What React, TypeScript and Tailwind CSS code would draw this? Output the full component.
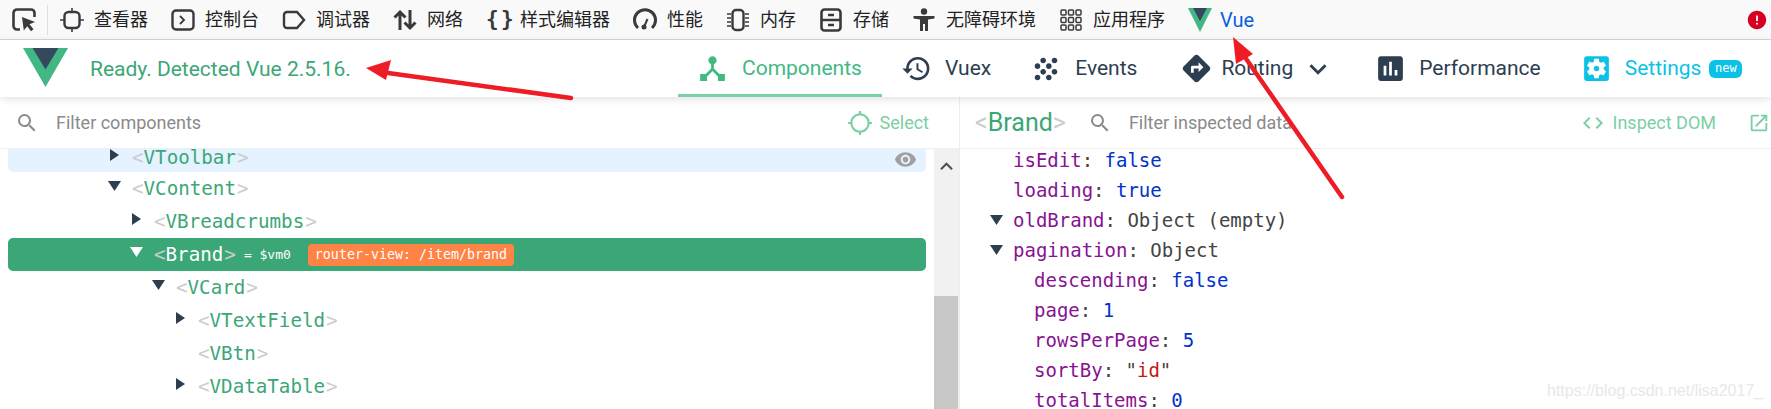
import type { ReactNode } from "react";
import {
  MdAssessment,
  MdCode,
  MdDeviceHub,
  MdDirections,
  MdError,
  MdExpandLess,
  MdExpandMore,
  MdGpsNotFixed,
  MdGrain,
  MdHistory,
  MdOpenInNew,
  MdSearch,
  MdSettingsApplications,
  MdVisibility,
} from "react-icons/md";

const ui = "font-['Roboto','Noto_Sans_CJK_SC',sans-serif]";
const mono = "font-['DejaVu_Sans_Mono',monospace]";

function VueLogo({ className }: { className: string }) {
  return (
    <svg viewBox="0 0 40 40" preserveAspectRatio="none" className={className}>
      <polygon points="0,0 40,0 20,40" fill="#41b883" />
      <polygon points="8.5,0 31.5,0 20,22" fill="#35495e" />
    </svg>
  );
}

const stroke = { fill: "none", stroke: "#3a3a3c", strokeWidth: 2.4 };

const toolbarItems: { label: string; icon: ReactNode }[] = [
  {
    label: "查看器",
    icon: (
      <svg viewBox="0 0 24 24" className="w-6 h-6" {...stroke}>
        <rect x="4.5" y="4" width="15" height="16" rx="4" />
        <path d="M12 0v4M12 20v4M0 12h4.5M19.5 12H24" strokeWidth="1.6" />
      </svg>
    ),
  },
  {
    label: "控制台",
    icon: (
      <svg viewBox="0 0 24 24" className="w-6 h-6" {...stroke}>
        <rect x="1.5" y="2.5" width="21" height="19" rx="3.5" />
        <path d="M9 8l4 4-4 4" strokeWidth="1.8" />
      </svg>
    ),
  },
  {
    label: "调试器",
    icon: (
      <svg viewBox="0 0 24 24" className="w-6 h-6" {...stroke}>
        <path d="M5 4h10l7 8-7 8H5a3 3 0 0 1-3-3V7a3 3 0 0 1 3-3z" />
      </svg>
    ),
  },
  {
    label: "网络",
    icon: (
      <svg viewBox="0 0 24 24" className="w-6 h-6" {...stroke} strokeWidth="3">
        <path d="M7 22V4M1.5 9.5L7 4l5.5 5.5M17 2v18M11.5 14.5L17 20l5.5-5.5" />
      </svg>
    ),
  },
  {
    label: "样式编辑器",
    icon: (
      <span className={`${mono} w-6 flex justify-between text-[21px] leading-none font-bold text-[#3a3a3c]`}>
        <span className="w-[9px]">{"{"}</span>
        <span className="w-[9px]">{"}"}</span>
      </span>
    ),
  },
  {
    label: "性能",
    icon: (
      <svg viewBox="0 0 24 24" className="w-6 h-6" {...stroke} strokeWidth="3">
        <path d="M5 20a10.5 10.5 0 1 1 14 0" />
        <path d="M11 19l3.5-8" strokeWidth="2" />
        <circle cx="11" cy="19" r="2.5" fill="#3a3a3c" stroke="none" />
      </svg>
    ),
  },
  {
    label: "内存",
    icon: (
      <svg viewBox="0 0 24 24" className="w-6 h-6" {...stroke} strokeWidth="2">
        <rect x="6.5" y="2" width="11" height="20" rx="3.5" strokeWidth="2.4" />
        <path d="M1 6h4M1 10h4M1 14h4M1 18h4M19 6h4M19 10h4M19 14h4M19 18h4" strokeWidth="1.4" />
      </svg>
    ),
  },
  {
    label: "存储",
    icon: (
      <svg viewBox="0 0 24 24" className="w-6 h-6" {...stroke}>
        <rect x="2.5" y="1.5" width="19" height="21" rx="3" strokeWidth="2.6" />
        <path d="M3 12h18M9 7h6M9 17h6" />
      </svg>
    ),
  },
  {
    label: "无障碍环境",
    icon: (
      <svg viewBox="0 0 24 24" className="w-6 h-6" fill="#3a3a3c">
        <circle cx="12" cy="3.5" r="3.2" />
        <path d="M1.5 8h21v2.6l-6.5 1V23h-3v-7h-2v7h-3V11.6l-6.5-1z" />
      </svg>
    ),
  },
  {
    label: "应用程序",
    icon: (
      <svg viewBox="0 0 24 24" className="w-6 h-6" fill="none" stroke="#3a3a3c" strokeWidth="1.5">
        {[2, 9.5, 17].flatMap((y) =>
          [2, 9.5, 17].map((x) => <rect key={`${x}-${y}`} x={x} y={y} width="5" height="5" rx="1" />),
        )}
      </svg>
    ),
  },
];

function Toolbar() {
  return (
    <div className={`${ui} flex items-center h-[40px] shrink-0 bg-[#f9f9fa] border-b border-[#d7d7db] text-[18px] text-[#222]`}>
      <div className="w-[48px] h-[30px] pl-[12px] border-r border-[#e0e0e2] flex items-center">
        <svg viewBox="0 0 24 24" className="w-6 h-6" fill="none" stroke="#3a3a3c" strokeWidth="2.6">
          <path d="M8 21.5H5a3.5 3.5 0 0 1-3.5-3.5V5A3.5 3.5 0 0 1 5 1.5h14A3.5 3.5 0 0 1 22.5 5v4" />
          <path d="M10 9l13 5-5.5 2.2 4 5-2.5 2-3.8-5-3.4 4.2z" fill="#3a3a3c" stroke="none" />
        </svg>
      </div>
      <div className="flex items-center gap-[23px] ml-[12px]">
        {toolbarItems.map((item) => (
          <div key={item.label} className="flex items-center gap-[10px]">
            {item.icon}
            <span className="leading-none">{item.label}</span>
          </div>
        ))}
        <div className="flex items-center gap-[8px]">
          <VueLogo className="w-6 h-6" />
          <span className="text-[20px] text-[#0a5fdc]">Vue</span>
        </div>
      </div>
      <MdError className="ml-auto mr-[3px] w-[22px] h-[22px] text-[#d70022]" />
    </div>
  );
}

const tabs = [
  { label: "Vuex", icon: <MdHistory className="w-[31px] h-[31px]" />, left: "ml-[19px]", gap: "gap-[13px]" },
  { label: "Events", icon: <MdGrain className="w-[34px] h-[34px]" />, left: "ml-[38px]", gap: "gap-[12px]" },
  { label: "Routing", icon: <MdDirections className="w-[33px] h-[33px]" />, left: "ml-[43px]", gap: "gap-[8px]" },
];

function Header() {
  return (
    <div className={`${ui} relative z-10 flex items-center h-[57px] shrink-0 bg-white shadow-[0_2px_8px_rgba(0,0,0,0.12)] text-[21px]`}>
      <VueLogo className="ml-[23px] w-[45px] h-[39px] mt-[-3px]" />
      <span className="ml-[22px] w-[261px] mt-[2px] whitespace-nowrap text-[#3ba776]">Ready. Detected Vue 2.5.16.</span>
      <div className="ml-[327px] flex items-center h-full text-[#2c3e50]">
        <div className="flex items-center gap-[13px] w-[204px] h-full pl-[18px] pt-[3px] border-b-[3px] border-[#7bd2a5] text-[#42b983]">
          <MdDeviceHub className="w-[33px] h-[33px]" />
          <span>Components</span>
        </div>
        {tabs.map((tab) => (
          <div key={tab.label} className={`flex items-center ${tab.left} ${tab.gap}`}>
            {tab.icon}
            <span>{tab.label}</span>
          </div>
        ))}
        <MdExpandMore className="ml-[8px] w-[34px] h-[34px]" />
        <div className="flex items-center gap-[12px] ml-[39px]">
          <MdAssessment className="w-[33px] h-[33px]" />
          <span>Performance</span>
        </div>
        <div className="flex items-center ml-[39px] text-[#0bc2e6]">
          <MdSettingsApplications className="w-[33px] h-[33px]" />
          <span className="ml-[12px]">Settings</span>
          <span className={`${mono} ml-[8px] w-[33px] text-center h-[18px] leading-[17px] rounded-[6px] bg-[#0bc2e6] text-white text-[12px]`}>new</span>
        </div>
      </div>
    </div>
  );
}

function Caret({ open, light }: { open: boolean; light?: boolean }) {
  const color = light ? "#ffffff" : "#2c3e50";
  return open ? (
    <svg viewBox="0 0 13 10" className="w-[13px] h-[10px] mt-[-6px]">
      <polygon points="0,0 13,0 6.5,10" fill={color} />
    </svg>
  ) : (
    <svg viewBox="0 0 9 12" className="w-[9px] h-[12px] mt-[-6px] ml-[2px]">
      <polygon points="0,0 9,6 0,12" fill={color} />
    </svg>
  );
}

const treeRows = [
  { name: "VToolbar", depth: 0, caret: "right", hovered: true },
  { name: "VContent", depth: 0, caret: "down" },
  { name: "VBreadcrumbs", depth: 1, caret: "right" },
  { name: "Brand", depth: 1, caret: "down", selected: true },
  { name: "VCard", depth: 2, caret: "down" },
  { name: "VTextField", depth: 3, caret: "right" },
  { name: "VBtn", depth: 3 },
  { name: "VDataTable", depth: 3, caret: "right" },
];

function ComponentTree() {
  return (
    <div className={`${mono} flex-1`}>
      <div className="mx-[8px] text-[19.2px]">
        {treeRows.map((row) => (
          <div
            key={row.name}
            className={`flex items-center ${row.hovered ? "h-[23px] pb-[6px] leading-[17px] rounded-b-[5px] bg-[#e5f2ff]" : "h-[33px] pt-[1px] rounded-[5px]"} ${row.selected ? "bg-[#3ba776] text-white" : "text-[#3ba776]"}`}
            style={{ paddingLeft: 100 + row.depth * 22 }}
          >
            <span className="w-[24px] shrink-0">
              {row.caret && <Caret open={row.caret === "down"} light={row.selected} />}
            </span>
            <span className="text-[#ccc]">&lt;</span>
            <span>{row.name}</span>
            <span className="ml-[1px] text-[#ccc]">&gt;</span>
            {row.selected && (
              <>
                <span className="ml-[8px] text-[13px]">= $vm0</span>
                <span className="ml-[17px] h-[22px] px-[7px] rounded-[4px] bg-[#ff8344] text-[13.3px] leading-[21px]">
                  router-view: /item/brand
                </span>
              </>
            )}
            {row.hovered && <MdVisibility className="ml-auto mr-[9px] w-[23px] h-[23px] mt-[3px] text-[#a0a0a0]" />}
          </div>
        ))}
      </div>
    </div>
  );
}

type Part = { text: string; color: string };
const key = "text-[#881391]";
const blue = "text-[#0033cc]";
const dark = "text-[#444]";

const stateRows: { indent: boolean; open?: boolean; parts: Part[] }[] = [
  { indent: false, parts: [{ text: "isEdit", color: key }, { text: ": ", color: dark }, { text: "false", color: blue }] },
  { indent: false, parts: [{ text: "loading", color: key }, { text: ": ", color: dark }, { text: "true", color: blue }] },
  { indent: false, open: true, parts: [{ text: "oldBrand", color: key }, { text: ": Object (empty)", color: dark }] },
  { indent: false, open: true, parts: [{ text: "pagination", color: key }, { text: ": Object", color: dark }] },
  { indent: true, parts: [{ text: "descending", color: key }, { text: ": ", color: dark }, { text: "false", color: blue }] },
  { indent: true, parts: [{ text: "page", color: key }, { text: ": ", color: dark }, { text: "1", color: blue }] },
  { indent: true, parts: [{ text: "rowsPerPage", color: key }, { text: ": ", color: dark }, { text: "5", color: blue }] },
  {
    indent: true,
    parts: [
      { text: "sortBy", color: key },
      { text: ': "', color: dark },
      { text: "id", color: "text-[#c41a16]" },
      { text: '"', color: dark },
    ],
  },
  { indent: true, parts: [{ text: "totalItems", color: key }, { text: ": ", color: dark }, { text: "0", color: blue }] },
];

function Inspector() {
  return (
    <div className="flex-1 min-w-0 flex flex-col">
      <div className={`${ui} flex items-center h-[52px] shrink-0 border-b border-[#eee] text-[18px]`}>
        <span className="ml-[15px] text-[#3ba776] text-[25px] leading-none">
          <span className="text-[#ccc]">&lt;</span>Brand<span className="text-[#ccc]">&gt;</span>
        </span>
        <MdSearch className="ml-[22px] w-[24px] h-[24px] text-[#8a8a8a]" />
        <span className="ml-[17px] text-[#8a8a8a]">Filter inspected data</span>
        <div className="ml-auto flex items-center text-[#7bcfa5]">
          <MdCode className="w-[24px] h-[24px]" />
          <span className="ml-[8px]">Inspect DOM</span>
          <MdOpenInNew className="ml-[32px] mr-[1px] w-[22px] h-[22px]" />
        </div>
      </div>
      <div className={`${mono} flex-1 overflow-hidden text-[19px]`}>
        {stateRows.map((row, index) => (
          <div
            key={row.parts[0].text}
            className={`flex items-center whitespace-pre ${index === 0 ? "h-[26px] pb-[4px]" : "h-[30px]"} ${row.indent ? "pl-[74px]" : "pl-[53px]"}`}
          >
            {row.open && (
              <span className="-ml-[23px] w-[23px]">
                <svg viewBox="0 0 13 10" className="w-[13px] h-[10px]">
                  <polygon points="0,0 13,0 6.5,10" fill="#2c3e50" />
                </svg>
              </span>
            )}
            {row.parts.map((part) => (
              <span key={part.text} className={part.color}>
                {part.text}
              </span>
            ))}
          </div>
        ))}
      </div>
    </div>
  );
}

export default function App() {
  return (
    <div className="relative w-[1771px] h-[409px] overflow-hidden bg-white flex flex-col">
      <Toolbar />
      <Header />
      <div className="flex flex-1 min-h-0">
        <div className="w-[960px] shrink-0 flex flex-col border-r border-[#eee]">
          <div className={`${ui} flex items-center h-[52px] shrink-0 border-b border-[#eee] text-[18px] text-[#8a8a8a]`}>
            <MdSearch className="ml-[15px] w-[24px] h-[24px]" />
            <span className="ml-[17px]">Filter components</span>
            <div className="ml-auto mr-[30px] flex items-center gap-[7px] text-[#7bcfa5]">
              <MdGpsNotFixed className="w-[26px] h-[26px]" />
              <span>Select</span>
            </div>
          </div>
          <div className="flex flex-1 min-h-0">
            <ComponentTree />
            <div className="w-[25px] shrink-0 bg-[#f1f1f1] flex flex-col">
              <MdExpandLess className="mt-[5px] w-[25px] h-[25px] text-[#505050]" />
              <div className="mt-auto h-[113px] bg-[#c8c8c8] mr-[1px]" />
            </div>
          </div>
        </div>
        <Inspector />
      </div>
      <span className="absolute left-[1547px] top-[379px] font-['Liberation_Sans',sans-serif] text-[16px] text-[#e8e8e8]">
        https://blog.csdn.net/lisa2017_
      </span>
      <svg viewBox="0 0 1771 409" className="absolute z-20 inset-0 w-[1771px] h-[409px] pointer-events-none">
        <path d="M388 73L571 98" stroke="#ee1c25" strokeWidth="4.5" strokeLinecap="round" />
        <polygon points="366,68 391,60 386,80" fill="#ee1c25" />
        <path d="M1240 50L1342 197" stroke="#ee1c25" strokeWidth="4.5" strokeLinecap="round" />
        <polygon points="1233,37 1253,54 1236,64" fill="#ee1c25" />
      </svg>
    </div>
  );
}
